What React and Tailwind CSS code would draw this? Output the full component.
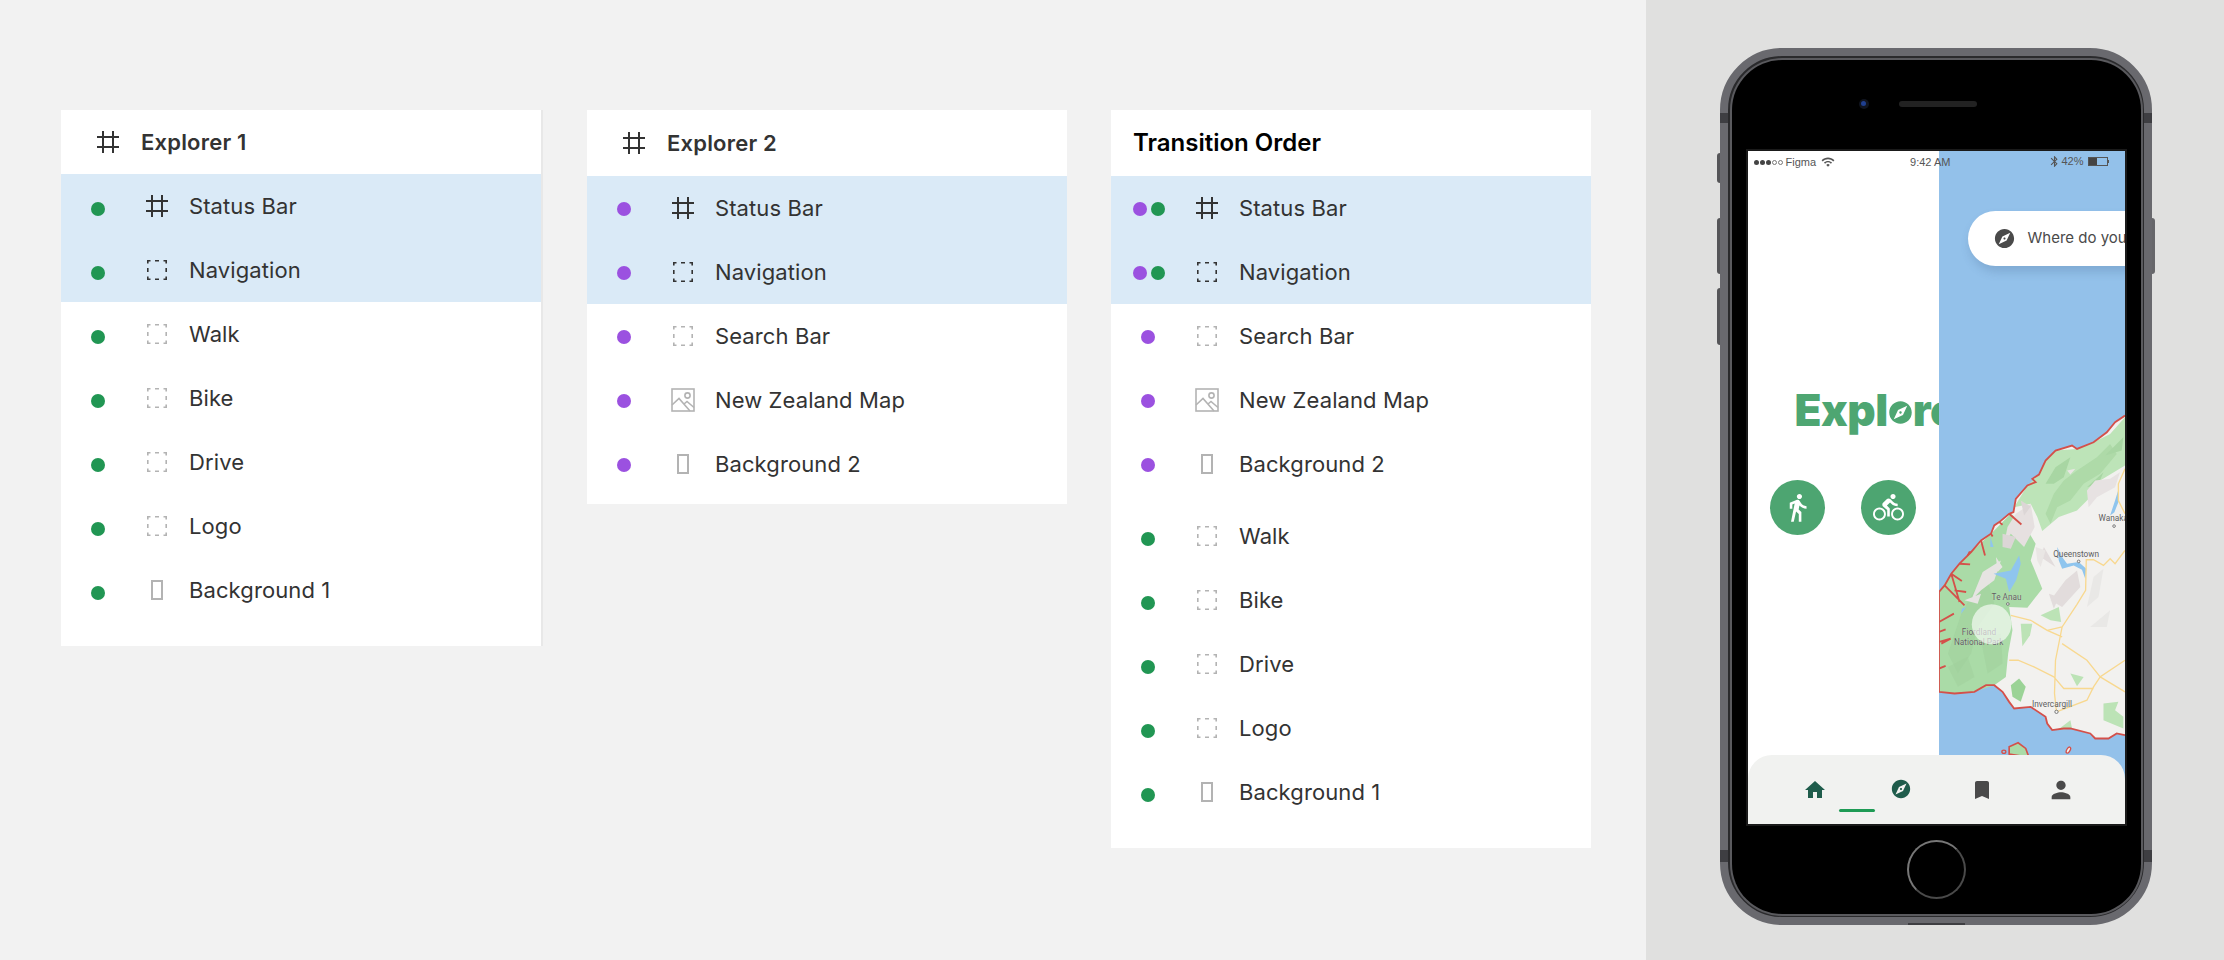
import React from "react";
import { MdHome, MdExplore, MdBookmark, MdPerson, MdDirectionsWalk, MdDirectionsBike, MdBluetooth, MdWifi } from "react-icons/md";

const HashIcon = () => (
  <svg width="22" height="22" viewBox="0 0 22 22" fill="none" stroke="#333333" strokeWidth="2">
    <path d="M6 0v22M16 0v22M0 6h22M0 16h22" />
  </svg>
);

const DashIcon = ({ dark }) => (
  <svg width="20" height="20" viewBox="0 0 20 20" fill="none" stroke={dark ? "#333333" : "#b3b3b3"} strokeWidth="1.6">
    <path d="M0.8 3.5V0.8H3.5M8 0.8h4M16.5 0.8h2.7V3.5M19.2 8v4M19.2 16.5v2.7H16.5M12 19.2H8M3.5 19.2H0.8V16.5M0.8 12V8" />
  </svg>
);

const RectIcon = () => (
  <svg width="12" height="20" viewBox="0 0 12 20" fill="none" stroke="#b3b3b3" strokeWidth="2">
    <rect x="1" y="1" width="10" height="18" />
  </svg>
);

const ImageIcon = () => (
  <svg width="24" height="24" viewBox="0 0 24 24" fill="none" stroke="#b3b3b3" strokeWidth="1.6">
    <rect x="1" y="1" width="22" height="22" />
    <circle cx="16.5" cy="7.5" r="2.6" />
    <path d="M1 17l7-6.5 11 12.5M13 16l3-2.5 7 6" />
  </svg>
);

const Dot = ({ color }) => <span className={`h-[14px] w-[14px] rounded-full ${color === "p" ? "bg-[#9b51e0]" : "bg-[#219653]"}`} />;

const Row = ({ dots, icon, label, dotShift }) => (
  <div className="flex h-16 items-center">
    <div className={`flex w-[74px] items-center justify-center gap-1 ${dotShift ? "pt-[6px]" : "pt-[2px]"} ${dots.length > 1 ? "pl-[2px]" : ""}`}>
      {dots.map((d, i) => (
        <Dot key={i} color={d} />
      ))}
    </div>
    <div className="flex w-11 items-center justify-center">{icon}</div>
    <span className="pl-[10px] text-[22px] leading-7 tracking-[0.1px] text-[#333333]">{label}</span>
  </div>
);

const Title = ({ children }) => (
  <div className="flex h-full items-center">
    <div className="flex w-[94px] items-center justify-end pr-[36px]">
      <HashIcon />
    </div>
    <span className="-ml-[14px] text-[22px] font-semibold leading-7 tracking-[0.2px] text-[#333333]">{children}</span>
  </div>
);

function WindowMap() {
  const coast =
    "M585 45L555 65L530 95L490 125L440 145L425 135L375 150L345 180L325 222L305 235L315 245L290 255L255 295L248 335L235 340L205 365L190 375L180 400L150 420L120 455L85 490L60 520L40 555L23 575V875L70 880L130 875L165 855L190 855L215 875L235 905L250 925L300 920L345 950L350 970L365 990L400 985L420 985L480 1000L495 1015L535 1015L560 1000L585 1005";
  return (
    <svg className="h-full w-full" viewBox="23 -750 562 2022" preserveAspectRatio="none">
      <rect x="23" y="-750" width="562" height="2022" fill="#93c1ea" />
      <path d={coast + "V45Z"} fill="#f2f1ef" />
      <path
        d="M585 50L540 100L490 125L440 145L375 150L345 180L325 222L290 255L250 320L300 310L320 350L335 392L385 350L440 330L480 290L510 240L585 195Z"
        fill="#bde4b8"
      />
      <path
        d="M23 575L60 520L120 455L180 400L240 340L280 372L315 430L300 480L335 565L290 622L235 620L245 690L232 760L225 830L190 855L130 875L70 880L23 875Z"
        fill="#aadba7"
      />
      <path d="M400 240L440 210L500 170L540 130L560 160L510 220L460 250L420 300L380 320L360 370L345 340L370 280Z" fill="#aedaa8" />
      <path d="M345 250L375 200L420 170L400 230L370 250ZM470 260L520 215L505 250ZM525 165L580 110L575 150Z" fill="#a8d6a3" />
      <path d="M90 640L130 570L170 540L190 610L140 680L120 760L80 820L50 760Z" fill="#a0d09c" opacity="0.55" />
      <path d="M50 800L110 770L130 830L80 860ZM150 720L210 700L215 790L170 820Z" fill="#a0d09c" opacity="0.5" />
      <path d="M255 340L300 310L312 380L280 440L240 400L220 430L230 380Z" fill="#e6e0e0" />
      <path d="M215 400L255 410L240 445L215 440ZM270 300L300 318L280 345Z" fill="#dcd6d6" />
      <path d="M495 240L540 235L570 215L555 260L500 290L475 320L470 270Z" fill="#e7e2e2" />
      <path d="M340 440L375 500L330 470ZM405 540L440 510L450 560L395 620L360 600ZM355 580L385 590L370 625Z" fill="#e2dcdc" />
      <path d="M120 600L155 515L210 480L190 540L150 570ZM195 470L215 500L200 515ZM100 600L150 580L140 610Z" fill="#e6e4e2" />
      <path d="M315 440L345 450L330 500L320 480ZM410 210L435 205L420 222Z" fill="#e9e6e4" />
      <path d="M480 680L540 630L530 680ZM490 530L520 505L505 590L470 620Z" fill="#e9e8e6" />
      <path d="M420 820L460 830L440 858Z" fill="#bce3b6" />
      <path d="M520 910L565 905L555 930L580 950V985L520 960Z" fill="#bce3b6" />
      <path d="M240 855L265 835L285 860L270 905L245 890Z" fill="#9bd396" />
      <path d="M330 645L385 620L392 665L360 660Z" fill="#bce3b6" />
      <path d="M270 670L305 670L298 705L275 738Z" fill="#bce3b6" />
      <path d="M380 990L420 960L425 985Z" fill="#bce3b6" />
      <path d="M265 465L240 510L188 520L225 535L235 575L256 540L270 490ZM380 440L385 480L395 505L430 495L455 508L465 535L468 505L445 485L410 490L395 470ZM565 268L555 300L540 345L553 335L567 300ZM178 410L188 440L178 440ZM92 625L105 620L90 640Z" fill="#8fc5ee" />
      <path d="M585 205L565 250L565 300L585 340M585 450L555 490L540 475L520 495L490 478L468 478L466 570L440 612L395 680L375 780L372 880L378 935M240 645L300 660L350 690L395 710M395 680L350 690M395 730L470 780L510 830L585 780M510 830L490 860L470 900L378 935M510 830L585 875M235 780L262 780L310 800L370 830M370 830L400 865H490" fill="none" stroke="#f8d88f" strokeWidth="4" />
      <path d={coast} fill="none" stroke="#d4504a" strokeWidth="5.5" />
      <path d="M235 340l37 32M205 365l10 8M180 400l5 8M150 420l12 45M120 455l-5 0l-5 10M85 490l32 2M60 520l32 22M40 555l60 60M60 520l25 85M70 570l35 5M23 665l45-25M23 695l20-8M23 725l35-10L30 730M23 805l20-8" fill="none" stroke="#d4504a" strokeWidth="5.5" />
      <path d="M235 1062V1040L262 1028L285 1045L295 1072Z" fill="#aadba7" stroke="#d4504a" strokeWidth="5" />
      <ellipse cx="219" cy="1055" rx="6" ry="5" fill="none" stroke="#d4504a" strokeWidth="4" />
      <ellipse cx="414" cy="1050" rx="5" ry="10" transform="rotate(30 414 1050)" fill="#f2f1ef" stroke="#d4504a" strokeWidth="4" />
      <g fontFamily="Roboto, sans-serif" fontSize="25" fill="#5e5e5e" stroke="#f2f2f2" strokeWidth="0.6" paintOrder="stroke">
        <text x="505" y="363">Wanaka</text>
        <text x="368" y="470">Queenstown</text>
        <text x="182" y="598">Te Anau</text>
        <text x="92" y="704">Fiordland</text>
        <text x="68" y="735">National Park</text>
        <text x="304" y="920">Invercargill</text>
      </g>
      <g fill="#f5f5f5" stroke="#666666" strokeWidth="2.5">
        <circle cx="552" cy="377" r="4" />
        <circle cx="445" cy="483" r="4" />
        <circle cx="231" cy="611" r="4" />
        <circle cx="378" cy="935" r="5" />
      </g>
      <circle cx="182" cy="672" r="60" fill="#ffffff" fillOpacity="0.62" />
    </svg>
  );
}

function Screen() {
  return (
    <div className="relative flex h-[673px] w-[377px] overflow-hidden bg-white ring-2 ring-[#1a1a1a]">
      <div className="flex w-[191px] shrink-0 flex-col overflow-hidden bg-white">
        <div className="ml-[47px] mt-[233px] flex h-[52px] items-center whitespace-nowrap text-[44px] font-black leading-none tracking-[-0.5px] text-[#4ea672]">
          Expl
          <MdExplore className="mx-[-1px] mt-[6px] shrink-0" size={27} />
          re
        </div>
        <div className="ml-[22px] mt-[44px] flex gap-[36px]">
          <div className="flex h-[55px] w-[55px] items-center justify-center rounded-full bg-[#4da571] text-white">
            <MdDirectionsWalk size={31} />
          </div>
          <div className="flex h-[55px] w-[55px] items-center justify-center rounded-full bg-[#4da571] text-white">
            <MdDirectionsBike size={31} />
          </div>
        </div>
      </div>
      <div className="min-w-0 flex-1">
        <WindowMap />
      </div>

      <div className="absolute left-0 right-0 top-0 flex h-[24px] items-center font-['Liberation_Sans',sans-serif] text-[11px] text-[#555555]">
        <div className="ml-[6px] flex gap-[1px]">
          <span className="h-[5px] w-[5px] rounded-full bg-[#444444]" />
          <span className="h-[5px] w-[5px] rounded-full bg-[#444444]" />
          <span className="h-[5px] w-[5px] rounded-full bg-[#444444]" />
          <span className="h-[5px] w-[5px] rounded-full border border-[#777777]" />
          <span className="h-[5px] w-[5px] rounded-full border border-[#777777]" />
        </div>
        <span className="ml-[3px]">Figma</span>
        <MdWifi className="ml-[5px] -mt-[2px]" size={14} />
        <span className="ml-[75px]">9:42 AM</span>
        <MdBluetooth className="ml-[98px] -mt-[3px]" size={13} />
        <span className="-mt-[2px]">42%</span>
        <div className="ml-[5px] -mt-[3px] flex h-[9px] w-[20px] border border-[#555555]">
          <span className="h-full w-[8px] bg-[#444444]" />
        </div>
        <span className="-mt-[3px] h-[3px] w-[1px] bg-[#555555]" />
      </div>

      <div className="absolute left-[220px] top-[60px] flex h-[55px] w-[300px] items-center rounded-l-full bg-white pl-[25px] shadow-[2px_6px_10px_rgba(60,90,130,0.22)]">
        <MdExplore className="text-[#4a4a4a]" size={23} />
        <span className="ml-[12px] whitespace-nowrap text-[15px] text-[#4a4a4a]">Where do you</span>
      </div>

      <div className="absolute bottom-0 left-0 right-0 flex h-[69px] rounded-t-[24px] bg-[#f1f2f0] pt-[23px]">
        <div className="relative ml-[55px] h-6 w-6 text-[#1f5c4b]">
          <MdHome size={24} />
        </div>
        <div className="relative ml-[62px] h-6 w-6 text-[#1f5c4b]">
          <MdExplore size={22} className="ml-[1px]" />
          <span className="absolute left-[-50px] top-[31px] h-[3px] w-[36px] rounded-full bg-[#1e9b55]" />
        </div>
        <div className="ml-[57px] h-6 w-6 text-[#4a4a4a]">
          <MdBookmark size={24} />
        </div>
        <div className="ml-[53px] -mt-[2px] h-7 w-7 text-[#4a4a4a]">
          <MdPerson size={28} />
        </div>
      </div>
    </div>
  );
}

function Phone() {
  return (
    <div className="relative h-[877px] w-[432px]">
      <span className="absolute left-[-3px] top-[105px] h-[30px] w-[3px] rounded-l-sm bg-[#555558]" />
      <span className="absolute left-[-3px] top-[170px] h-[56px] w-[3px] rounded-l-sm bg-[#555558]" />
      <span className="absolute left-[-3px] top-[240px] h-[57px] w-[3px] rounded-l-sm bg-[#555558]" />
      <span className="absolute right-[-3px] top-[170px] h-[56px] w-[3px] rounded-r-sm bg-[#66666a]" />
      <div className="flex h-full w-full rounded-[62px] border-[8px] border-[#69696e] bg-[#2a2a2c] p-[1.5px]">
        <div className="flex h-full w-full rounded-[52px] bg-[#5a5a5e] p-[2px]">
          <div className="flex h-full w-full flex-col items-center rounded-[50px] bg-black">
            <div className="mt-[34px] flex h-[20px] w-full items-center">
              <span className="ml-[127px] flex h-[10px] w-[10px] items-center justify-center rounded-full bg-[#10141f]">
                <span className="h-[5px] w-[5px] rounded-full bg-[#1f3f90]" />
              </span>
              <span className="ml-[30px] h-[6px] w-[78px] rounded-full bg-[#222222]" />
            </div>
            <div className="mt-[37px]">
              <Screen />
            </div>
            <div className="mt-[16px] h-[59px] w-[59px] rounded-full border-2 border-[#4a4a4a] border-t-[#777777] border-l-[#777777]" />
          </div>
        </div>
      </div>
      <span className="absolute left-0 top-[65px] h-[10px] w-[8px] bg-[#3e3e42]" />
      <span className="absolute right-0 top-[65px] h-[10px] w-[8px] bg-[#3e3e42]" />
      <span className="absolute bottom-[63px] left-0 h-[12px] w-[8px] bg-[#3e3e42]" />
      <span className="absolute bottom-[63px] right-0 h-[12px] w-[8px] bg-[#3e3e42]" />
      <span className="absolute bottom-0 left-[188px] h-[2px] w-[57px] bg-[#3e3e42]" />
    </div>
  );
}

export default function App() {
  return (
    <div className="flex h-[960px] w-[2224px] overflow-hidden bg-[#f2f2f2] font-['Inter',sans-serif]">
      <div className="flex w-[1646px] shrink-0 items-start gap-[44px] pl-[61px] pt-[110px]">
        <div className="w-[482px] border-r-2 border-[#e8e8e8] bg-white pb-6">
          <div className="h-16">
            <Title>Explorer 1</Title>
          </div>
          <div className="bg-[#daeaf7]">
            <Row dotShift dots={["g"]} icon={<HashIcon />} label="Status Bar" />
            <Row dotShift dots={["g"]} icon={<DashIcon dark />} label="Navigation" />
          </div>
          <Row dotShift dots={["g"]} icon={<DashIcon />} label="Walk" />
          <Row dotShift dots={["g"]} icon={<DashIcon />} label="Bike" />
          <Row dotShift dots={["g"]} icon={<DashIcon />} label="Drive" />
          <Row dotShift dots={["g"]} icon={<DashIcon />} label="Logo" />
          <Row dotShift dots={["g"]} icon={<RectIcon />} label="Background 1" />
        </div>

        <div className="w-[480px] bg-white pb-2">
          <div className="h-[66px]">
            <Title>Explorer 2</Title>
          </div>
          <div className="bg-[#daeaf7]">
            <Row dots={["p"]} icon={<HashIcon />} label="Status Bar" />
            <Row dots={["p"]} icon={<DashIcon dark />} label="Navigation" />
          </div>
          <Row dots={["p"]} icon={<DashIcon />} label="Search Bar" />
          <Row dots={["p"]} icon={<ImageIcon />} label="New Zealand Map" />
          <Row dots={["p"]} icon={<RectIcon />} label="Background 2" />
        </div>

        <div className="w-[480px] bg-white pb-6">
          <div className="flex h-[66px] items-center pl-[22px] text-[24px] font-semibold text-black">Transition Order</div>
          <div className="bg-[#daeaf7]">
            <Row dots={["p", "g"]} icon={<HashIcon />} label="Status Bar" />
            <Row dots={["p", "g"]} icon={<DashIcon dark />} label="Navigation" />
          </div>
          <Row dots={["p"]} icon={<DashIcon />} label="Search Bar" />
          <Row dots={["p"]} icon={<ImageIcon />} label="New Zealand Map" />
          <Row dots={["p"]} icon={<RectIcon />} label="Background 2" />
          <div className="h-2" />
          <Row dotShift dots={["g"]} icon={<DashIcon />} label="Walk" />
          <Row dotShift dots={["g"]} icon={<DashIcon />} label="Bike" />
          <Row dotShift dots={["g"]} icon={<DashIcon />} label="Drive" />
          <Row dotShift dots={["g"]} icon={<DashIcon />} label="Logo" />
          <Row dotShift dots={["g"]} icon={<RectIcon />} label="Background 1" />
        </div>
      </div>

      <div className="flex flex-1 justify-center bg-[#e0e0df] pl-[2px] pt-[48px]">
        <Phone />
      </div>
    </div>
  );
}
